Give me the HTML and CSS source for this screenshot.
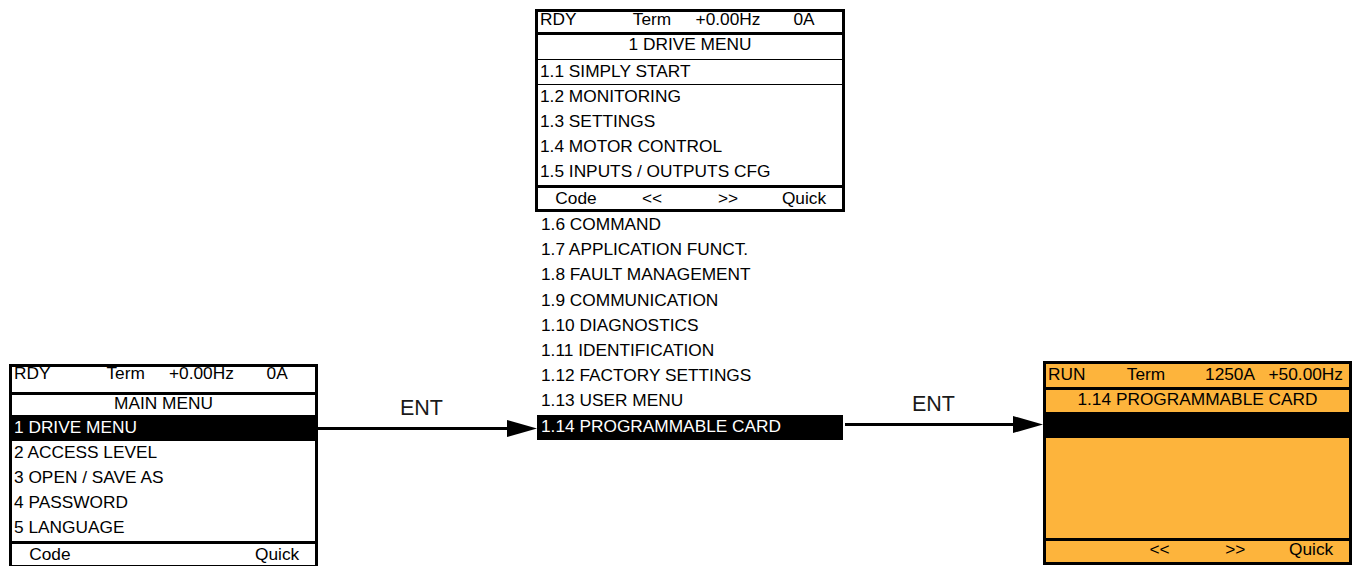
FILE: index.html
```html
<!DOCTYPE html>
<html lang="en">
<head>
    <meta charset="UTF-8">
    <meta name="viewport" content="width=device-width, initial-scale=1.0">
    <title>Drive Menu Navigation</title>
    <link rel="stylesheet" href="styles.css">
</head>
<body>

    <div class="diagram">

        <!-- Main menu screen -->
        <section class="panel panel-main">
            <div class="status">
                <span>RDY</span><span>Term</span><span>+0.00Hz</span><span>0A</span>
            </div>
            <div class="title">MAIN MENU</div>
            <ul class="menu">
                <li class="selected">1 DRIVE MENU</li>
                <li>2 ACCESS LEVEL</li>
                <li>3 OPEN / SAVE AS</li>
                <li>4 PASSWORD</li>
                <li>5 LANGUAGE</li>
            </ul>
            <div class="keys">
                <span>Code</span><span></span><span></span><span>Quick</span>
            </div>
        </section>

        <div class="arrow arrow-first">
            <div class="arrow-label">ENT</div>
            <svg width="219" height="17" viewBox="0 0 219 17">
                <line x1="0" y1="8.5" x2="192" y2="8.5" stroke="#000" stroke-width="3"/>
                <polygon points="189,0 219,8.5 189,17" fill="#000"/>
            </svg>
        </div>

        <!-- Drive menu screen with the rest of the list -->
        <div class="drive-column">
            <section class="panel panel-drive">
                <div class="status">
                    <span>RDY</span><span>Term</span><span>+0.00Hz</span><span>0A</span>
                </div>
                <div class="title">1 DRIVE MENU</div>
                <ul class="menu">
                    <li class="ruled">1.1 SIMPLY START</li>
                    <li>1.2 MONITORING</li>
                    <li>1.3 SETTINGS</li>
                    <li>1.4 MOTOR CONTROL</li>
                    <li>1.5 INPUTS / OUTPUTS CFG</li>
                </ul>
                <div class="keys">
                    <span>Code</span><span>&lt;&lt;</span><span>&gt;&gt;</span><span>Quick</span>
                </div>
            </section>
            <ul class="menu menu-more">
                <li>1.6 COMMAND</li>
                <li>1.7 APPLICATION FUNCT.</li>
                <li>1.8 FAULT MANAGEMENT</li>
                <li>1.9 COMMUNICATION</li>
                <li>1.10 DIAGNOSTICS</li>
                <li>1.11 IDENTIFICATION</li>
                <li>1.12 FACTORY SETTINGS</li>
                <li>1.13 USER MENU</li>
                <li class="selected">1.14 PROGRAMMABLE CARD</li>
            </ul>
        </div>

        <div class="arrow arrow-second">
            <div class="arrow-label">ENT</div>
            <svg width="198" height="17" viewBox="0 0 198 17">
                <line x1="0" y1="8.5" x2="171" y2="8.5" stroke="#000" stroke-width="3"/>
                <polygon points="168,0 198,8.5 168,17" fill="#000"/>
            </svg>
        </div>

        <!-- Programmable card screen (running) -->
        <section class="panel panel-card">
            <div class="status">
                <span>RUN</span><span>Term</span><span>1250A</span><span>+50.00Hz</span>
            </div>
            <div class="title">1.14 PROGRAMMABLE CARD</div>
            <ul class="menu">
                <li class="selected"></li>
                <li></li>
                <li></li>
                <li></li>
                <li></li>
            </ul>
            <div class="keys">
                <span></span><span>&lt;&lt;</span><span>&gt;&gt;</span><span>Quick</span>
            </div>
        </section>

    </div>

</body>
</html>
```

FILE: styles.css
```css
body {
    margin: 0;
    padding: 0;
    background-color: #fff;
    font-family: "Liberation Sans", Arial, sans-serif;
    font-size: 17.3px;
    color: #000;
    overflow: hidden;
}

.diagram {
    display: flex;
    align-items: flex-start;
    padding-left: 9px;
}

/* Keypad screens */
.panel {
    width: 309px;
    box-sizing: border-box;
    border: 3px solid #000;
    background-color: #fff;
}

.status {
    display: grid;
    grid-template-columns: repeat(4, 1fr);
    border-bottom: 3px solid #000;
}

.status span {
    text-align: center;
}

.status span:first-child {
    text-align: left;
    padding-left: 2px;
}

.title {
    text-align: center;
    border-bottom: 1px solid #000;
}

.menu {
    list-style: none;
    margin: 0;
    padding: 0;
}

.menu li {
    height: 25px;
    line-height: 23px;
    padding-left: 2px;
    white-space: nowrap;
}

.menu li.ruled {
    box-sizing: border-box;
    border-bottom: 1px solid #000;
}

.menu li.selected {
    background-color: #000;
    color: #fff;
}

.keys {
    display: grid;
    grid-template-columns: repeat(4, 1fr);
    height: 21px;
    line-height: 20px;
    border-top: 3px solid #000;
}

.keys span {
    text-align: center;
}

/* Main menu */
.panel-main {
    margin-top: 364px;
}

.panel-main .status {
    height: 25px;
    line-height: 13px;
}

.panel-main .title {
    height: 20px;
    line-height: 17px;
}

/* Drive menu */
.drive-column {
    width: 310px;
    margin-top: 9px;
}

.panel-drive {
    width: 310px;
}

.panel-drive .status {
    height: 20px;
    line-height: 14px;
}

.panel-drive .title {
    height: 24px;
    line-height: 19px;
}

.menu-more {
    margin: 1px 2px 0;
}

.menu-more li {
    height: 25.2px;
    padding-left: 4px;
}

/* Programmable card, drive running */
.panel-card {
    margin-top: 361px;
    background-color: #fdb43c;
}

.panel-card .status {
    grid-template-columns: 63px 74px 80px 1fr;
    height: 23px;
    line-height: 20px;
}

.panel-card .status span:nth-child(3) {
    text-align: right;
    padding-right: 8px;
}

.panel-card .status span:nth-child(4) {
    text-align: right;
    padding-right: 6px;
}

.panel-card .title {
    height: 22px;
    line-height: 18px;
}

.panel-card .keys {
    line-height: 16px;
}

/* ENT arrows between screens */
.arrow {
    display: flex;
    flex-direction: column;
}

.arrow svg {
    display: block;
}

.arrow-label {
    font-size: 21.5px;
    line-height: 23px;
    color: #1a1a1a;
}

.arrow-first {
    width: 219px;
    margin-top: 397px;
    margin-right: -2px;
}

.arrow-first .arrow-label {
    padding-left: 82px;
}

.arrow-second {
    width: 198px;
    margin-top: 393px;
}

.arrow-second .arrow-label {
    padding-left: 67px;
}
```
